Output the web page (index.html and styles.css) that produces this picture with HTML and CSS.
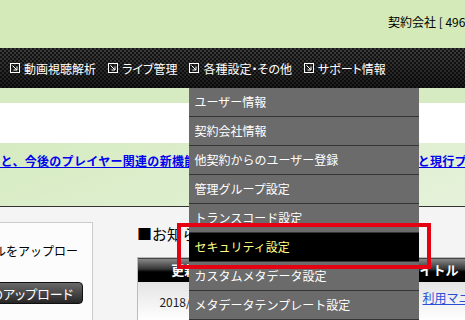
FILE: index.html
```html
<!DOCTYPE html>
<html lang="ja">
<head>
    <meta charset="UTF-8">
    <title>設定</title>
    <link rel="stylesheet" href="styles.css">
</head>
<body>
<header class="top">
    <div class="account">契約会社 [ 4965000 : サンプル株式会社 ]</div>
</header>
<nav class="gnav">
    <ul>
        <li><svg class="ico" viewBox="0 0 10 10"><rect x="0.5" y="0.5" width="9" height="9"/><path d="M2.5 2.5 L7 7 M7 3.5 V7 H3.5"/></svg>動画視聴解析</li>
        <li><svg class="ico" viewBox="0 0 10 10"><rect x="0.5" y="0.5" width="9" height="9"/><path d="M2.5 2.5 L7 7 M7 3.5 V7 H3.5"/></svg>ライブ管理</li>
        <li><svg class="ico" viewBox="0 0 10 10"><rect x="0.5" y="0.5" width="9" height="9"/><path d="M2.5 2.5 L7 7 M7 3.5 V7 H3.5"/></svg>各種設定・その他
            <ul class="dropdown">
                <li>ユーザー情報</li>
                <li>契約会社情報</li>
                <li>他契約からのユーザー登録</li>
                <li>管理グループ設定</li>
                <li>トランスコード設定</li>
                <li class="current">セキュリティ設定<span class="mark"></span></li>
                <li>カスタムメタデータ設定</li>
                <li>メタデータテンプレート設定</li>
            </ul>
        </li>
        <li><svg class="ico" viewBox="0 0 10 10"><rect x="0.5" y="0.5" width="9" height="9"/><path d="M2.5 2.5 L7 7 M7 3.5 V7 H3.5"/></svg>サポート情報</li>
    </ul>
</nav>
<div class="strip"></div>
<div class="band"></div>
<div class="notice">
    <a href="#">終了と、今後のプレイヤー関連の新機能の提供開始に伴い旧バージョン機能追加と現行プレイヤーの併用について</a>
</div>
<main class="content">
    <section class="upload">
        <p>動画ファイルをアップロー</p>
        <button>動画ファイルのアップロード</button>
    </section>
    <section class="news">
        <h2>■お知らせ</h2>
        <table>
            <colgroup>
                <col class="c-date">
                <col class="c-kind">
                <col>
            </colgroup>
            <tr>
                <th>更新日</th>
                <th>区分</th>
                <th class="th-title">タイトル</th>
            </tr>
            <tr>
                <td class="date">2018/06/20</td>
                <td class="kind">マニュアル</td>
                <td class="title"><a href="#">利用マニュアルを更新しました</a></td>
            </tr>
        </table>
    </section>
</main>
</body>
</html>
```

FILE: styles.css
```css
* {
    box-sizing: border-box;
}

body {
    margin: 0;
    height: 320px;
    overflow: hidden;
    font-family: "Noto Sans CJK JP", sans-serif;
    font-size: 12px;
    color: #000;
    background-color: #f4f4f4;
}

.top {
    height: 48px;
    background-color: #d4eab8;
    padding: 13px 0 0 388px;
    white-space: nowrap;
    overflow: hidden;
    line-height: 17px;
}

.gnav {
    height: 40px;
    background:
        linear-gradient(rgba(0, 0, 0, 0), rgba(0, 0, 0, 0.55)),
        repeating-conic-gradient(#3c3c3c 0 25%, #151515 0 50%) 0 0 / 4px 4px;
}

.gnav > ul {
    display: flex;
    height: 100%;
    margin: 0;
    padding: 0 0 0 10px;
    list-style: none;
    gap: 12px;
}

.gnav > ul > li {
    display: flex;
    align-items: center;
    gap: 4px;
    color: #fff;
    position: relative;
    white-space: nowrap;
    font-feature-settings: "palt";
}

.ico {
    width: 10px;
    height: 10px;
    fill: none;
    stroke: #fff;
    stroke-width: 1;
}

.dropdown {
    position: absolute;
    top: 100%;
    left: 0;
    width: 230px;
    margin: 0;
    padding: 0;
    list-style: none;
    background-color: #6b6b6b;
    font-feature-settings: normal;
    z-index: 10;
}

.dropdown li {
    position: relative;
    height: 29px;
    line-height: 28px;
    padding-left: 5px;
    border-bottom: 1px solid #343434;
    color: #fff;
}

.dropdown li.current {
    background-color: #000;
    color: #ffff8a;
}

.mark {
    position: absolute;
    top: -10px;
    left: -12px;
    width: 254px;
    height: 46px;
    border: 4px solid #e50012;
}

.strip {
    height: 15px;
    background-color: #d6ebc1;
}

.band {
    height: 40px;
    background-color: #fff;
}

.notice {
    height: 64px;
    padding-top: 9px;
    background: linear-gradient(160deg, #d6ebc1, #e5f2da);
    border-bottom: 1px solid #333;
    white-space: nowrap;
    overflow: hidden;
}

.notice a {
    display: inline-block;
    margin-left: -24px;
    color: #0000ee;
    font-weight: bold;
    letter-spacing: 0.3px;
    line-height: 17px;
}

.content {
    display: flex;
    align-items: flex-start;
}

.upload {
    flex: none;
    width: 200px;
    margin: 15px 0 0 -107px;
    padding: 19px 9px 20px;
    background-color: #fcfcfc;
    border: 1px solid #ccc;
    display: flex;
    flex-direction: column;
    align-items: flex-end;
}

.upload p {
    margin: 0 5px 0 0;
    line-height: 17px;
    white-space: nowrap;
}

.upload button {
    margin-top: 23px;
    height: 22px;
    padding: 0 9px 0 12px;
    font: inherit;
    font-size: 13px;
    font-feature-settings: "palt";
    color: #fff;
    background: linear-gradient(#6a6a6a, #262626);
    border: 1px solid #111;
    border-radius: 4px;
    white-space: nowrap;
}

.news {
    flex: none;
    margin: 18px 0 0 44px;
}

.news h2 {
    margin: 0 0 14px;
    font-size: 15px;
    font-weight: normal;
    line-height: 18px;
}

table {
    width: 540px;
    border-collapse: collapse;
    table-layout: fixed;
    border: 1px solid #bbb;
}

.c-date {
    width: 106px;
}

.c-kind {
    width: 159px;
}

th {
    height: 24px;
    padding: 0;
    color: #fff;
    font-size: 13px;
    font-weight: bold;
    background: linear-gradient(#8c8c8c, #333 45%, #000 55%, #000);
}

.th-title {
    text-align: left;
    padding-left: 4px;
}

td {
    height: 40px;
    background: linear-gradient(#e4e4e4, #fff);
    border-bottom: 1px solid #ccc;
}

td.date,
td.kind {
    text-align: center;
    vertical-align: middle;
    color: #222;
}

td.title {
    vertical-align: top;
    padding: 7px 0 0 20px;
    white-space: nowrap;
    overflow: hidden;
}

td.title a {
    color: #2a4fd6;
}
```
